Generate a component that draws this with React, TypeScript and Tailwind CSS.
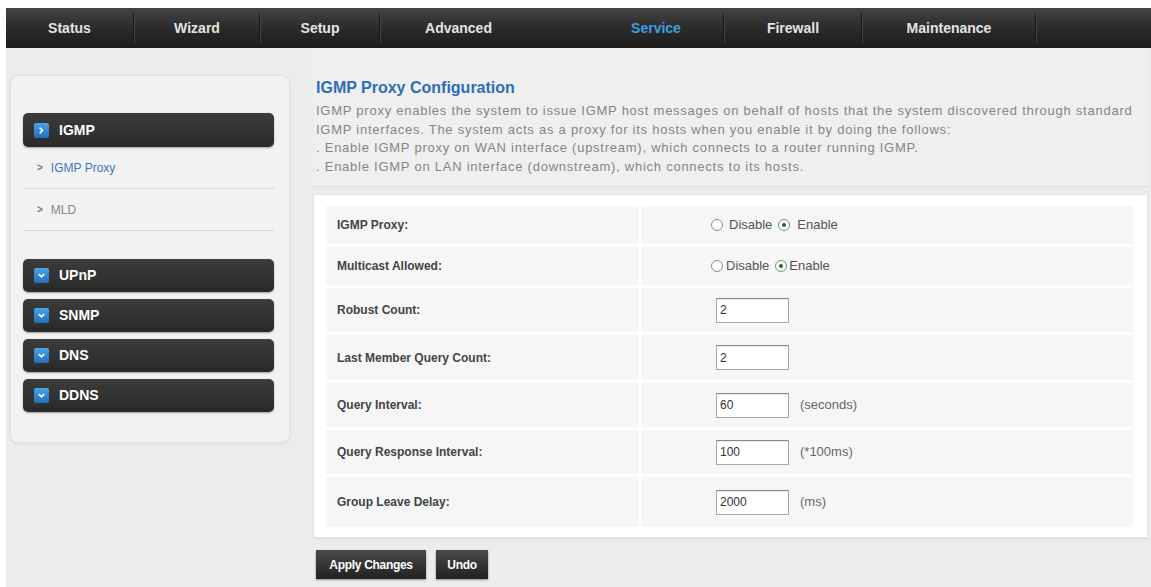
import React from 'react';

const font = { fontFamily: '"Liberation Sans", Arial, sans-serif' };

const navItems = [
  { label: 'Status', w: 'w-[127px]' },
  { label: 'Wizard', w: 'w-[124px]' },
  { label: 'Setup', w: 'w-[118px]' },
  { label: 'Advanced', w: 'w-[155px]', noSep: true },
  { label: '', w: 'w-[53px]' },
  { label: 'Service', w: 'w-[134px]', active: true },
  { label: 'Firewall', w: 'w-[136px]' },
  { label: 'Maintenance', w: 'w-[172px]' },
];

function Separator() {
  return (
    <div className="flex h-[30px] shrink-0">
      <div className="w-px bg-[#141414]" />
      <div className="w-px bg-[#474747]" />
    </div>
  );
}

function NavBar() {
  return (
    <div className="flex h-[40px] items-center bg-gradient-to-b from-[#444444] via-[#2b2b2b] to-[#1c1c1c]">
      {navItems.map((item, i) => (
        <React.Fragment key={i}>
          <div
            className={`${item.w} shrink-0 text-center text-[14px] font-bold ${
              item.active ? 'text-[#3d9fe0]' : 'text-[#e4e4e4]'
            }`}
          >
            {item.label}
          </div>
          {item.label && !item.noSep && <Separator />}
        </React.Fragment>
      ))}
    </div>
  );
}

function BlueIcon({ open }: { open?: boolean }) {
  return (
    <span className="flex h-[15px] w-[15px] items-center justify-center rounded-[2px] bg-gradient-to-b from-[#4ba3e8] to-[#1f6fc0]">
      {open ? (
        <svg width="9" height="9" viewBox="0 0 10 10">
          <path d="M3 2l3 3-3 3" fill="none" stroke="#fff" strokeWidth="1.8" />
        </svg>
      ) : (
        <svg width="9" height="9" viewBox="0 0 10 10">
          <path d="M2 3.5l3 3 3-3" fill="none" stroke="#fff" strokeWidth="1.8" />
        </svg>
      )}
    </span>
  );
}

function MenuBar({ label, open, h }: { label: string; open?: boolean; h: string }) {
  return (
    <div
      className={`flex ${h} items-center gap-[10px] rounded-[5px] bg-gradient-to-b from-[#3c3c3c] to-[#2a2a2a] pl-[11px] shadow-[0_1px_2px_rgba(0,0,0,0.35)]`}
    >
      <BlueIcon open={open} />
      <span className="text-[14px] font-bold text-white">{label}</span>
    </div>
  );
}

function SubItem({ label, active }: { label: string; active?: boolean }) {
  return (
    <div className="flex h-[42px] items-center border-b border-[#d4d4d4] pl-[14px]">
      <span className="mr-[8px] text-[10px] font-bold text-[#777]">&gt;</span>
      <span className={`text-[12px] ${active ? 'text-[#3c78c0]' : 'text-[#888]'}`}>{label}</span>
    </div>
  );
}

function Sidebar() {
  return (
    <div className="ml-[4px] mt-[27px] h-[368px] w-[280px] shrink-0 rounded-[8px] border border-[#e2e2e2] bg-[#f2f2f2] pl-[12px] pr-[15px] pt-[37px] shadow-[0_1px_3px_rgba(0,0,0,0.08)]">
      <MenuBar label="IGMP" open h="h-[34px]" />
      <SubItem label="IGMP Proxy" active />
      <SubItem label="MLD" />
      <div className="mt-[28px] flex flex-col gap-[7px]">
        <MenuBar label="UPnP" h="h-[33px]" />
        <MenuBar label="SNMP" h="h-[33px]" />
        <MenuBar label="DNS" h="h-[33px]" />
        <MenuBar label="DDNS" h="h-[33px]" />
      </div>
    </div>
  );
}

function Radio({ checked }: { checked?: boolean }) {
  return (
    <span
      className={`flex h-[12px] w-[12px] items-center justify-center rounded-full border bg-white ${
        checked ? 'border-[#5e9e62]' : 'border-[#8a8a8a]'
      }`}
    >
      {checked && <span className="h-[4px] w-[4px] rounded-full bg-[#2d5e33]" />}
    </span>
  );
}

function RadioPair({ tight }: { tight?: boolean }) {
  return (
    <div className="flex items-center text-[13px] text-[#555]">
      <Radio />
      <span className={tight ? 'ml-[3px]' : 'ml-[6px]'}>Disable</span>
      <span className="ml-[6px]">
        <Radio checked />
      </span>
      <span className={tight ? 'ml-[2px]' : 'ml-[7px]'}>Enable</span>
    </div>
  );
}

function NumField({ value, unit }: { value: string; unit?: string }) {
  return (
    <div className="ml-[5px] flex items-center">
      <div className="flex h-[25px] w-[73px] items-center border border-[#a8a8a8] border-t-[#8a8a8a] bg-white pl-[3px] text-[12px] text-[#333] shadow-[inset_0_1px_1px_rgba(0,0,0,0.08)]">
        {value}
      </div>
      {unit && <span className="ml-[11px] text-[13px] text-[#666]">{unit}</span>}
    </div>
  );
}

const rows: { label: string; h: string; content: React.ReactNode }[] = [
  { label: 'IGMP Proxy:', h: 'h-[38px]', content: <RadioPair /> },
  { label: 'Multicast Allowed:', h: 'h-[38px]', content: <RadioPair tight /> },
  { label: 'Robust Count:', h: 'h-[44px]', content: <NumField value="2" /> },
  { label: 'Last Member Query Count:', h: 'h-[45px]', content: <NumField value="2" /> },
  { label: 'Query Interval:', h: 'h-[44px]', content: <NumField value="60" unit="(seconds)" /> },
  { label: 'Query Response Interval:', h: 'h-[44px]', content: <NumField value="100" unit="(*100ms)" /> },
  { label: 'Group Leave Delay:', h: 'h-[50px]', content: <NumField value="2000" unit="(ms)" /> },
];

function ConfigTable() {
  return (
    <div className="mt-[7px] border border-[#e4e4e4] bg-white pb-[10px] pl-[12px] pr-[14px] pt-[11px] shadow-[0_1px_2px_rgba(0,0,0,0.06)]">
      <div className="flex flex-col gap-[3px]">
        {rows.map((r) => (
          <div key={r.label} className={`flex ${r.h} gap-[2px]`}>
            <div className="flex w-[313px] items-center bg-[#f6f6f6] pl-[11px] text-[12px] font-bold text-[#444]">
              {r.label}
            </div>
            <div className="flex flex-1 items-center bg-[#f6f6f6] pl-[70px]">{r.content}</div>
          </div>
        ))}
      </div>
    </div>
  );
}

function DarkButton({ label, w }: { label: string; w: string }) {
  return (
    <button className={`flex h-[29px] ${w} items-center justify-center bg-gradient-to-b from-[#4a4a4a] to-[#222] text-[12px] font-bold tracking-[-0.3px] text-white shadow-[0_1px_2px_rgba(0,0,0,0.4)]`}>
      {label}
    </button>
  );
}

export default function App() {
  return (
    <div className="h-[587px] w-[1151px] overflow-hidden bg-white pl-[6px] pt-[8px]" style={font}>
      <div className="h-full bg-[#ececec]">
        <NavBar />
        <div className="flex">
          <Sidebar />
          <div className="ml-[23px] w-[835px]">
            <div className="border-b border-[#dcdcdc] bg-[#efefef] pb-[10px] pl-[3px] pt-[30px]">
              <h1 className="text-[16px] font-bold leading-[20px] text-[#2f6db5]">IGMP Proxy Configuration</h1>
              <div className="mt-[4px] whitespace-nowrap text-[13px] leading-[18.5px] tracking-[0.75px] text-[#858585]">
                <div>IGMP proxy enables the system to issue IGMP host messages on behalf of hosts that the system discovered through standard</div>
                <div>IGMP interfaces. The system acts as a proxy for its hosts when you enable it by doing the follows:</div>
                <div>. Enable IGMP proxy on WAN interface (upstream), which connects to a router running IGMP.</div>
                <div>. Enable IGMP on LAN interface (downstream), which connects to its hosts.</div>
              </div>
            </div>
            <ConfigTable />
            <div className="mt-[12px] flex gap-[10px] pl-[3px]">
              <DarkButton label="Apply Changes" w="w-[110px]" />
              <DarkButton label="Undo" w="w-[52px]" />
            </div>
          </div>
        </div>
      </div>
    </div>
  );
}
